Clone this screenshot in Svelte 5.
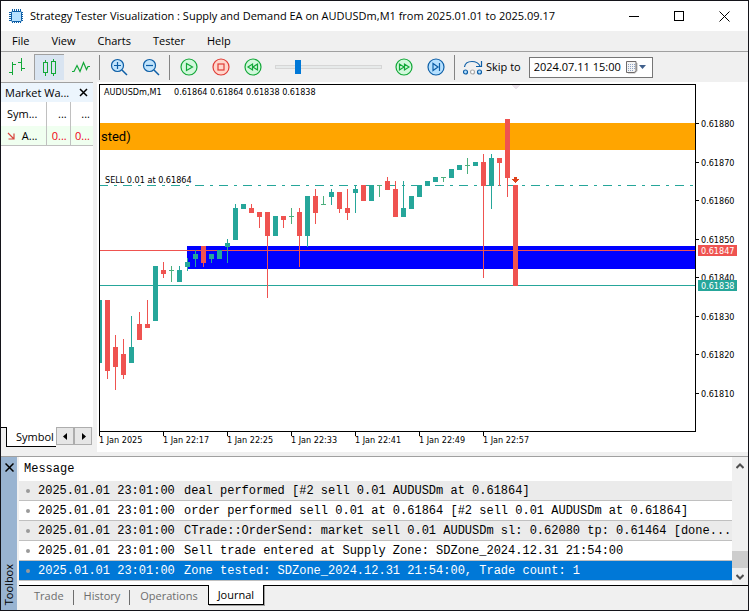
<script>
  let speed = 19
  let skipTo = '2024.07.11 15:00'
  let chartType = 'candles'
  let activeTab = 'Journal'

  const menus = ['File', 'View', 'Charts', 'Tester', 'Help']
  const tabs = ['Trade', 'History', 'Operations', 'Journal']

  const times = ['1 Jan 2025', '1 Jan 22:17', '1 Jan 22:25', '1 Jan 22:33', '1 Jan 22:41', '1 Jan 22:49', '1 Jan 22:57']

  const prices = [
    ['0.61880', 39],
    ['0.61870', 78],
    ['0.61860', 116],
    ['0.61850', 155],
    ['0.61840', 193],
    ['0.61830', 232],
    ['0.61820', 270],
    ['0.61810', 309]
  ]

  // kind, high, low, body top, body bottom (chart rows)
  const candles = [
    ['up', 216, 279, 216, 279],
    ['down', 216, 295, 216, 287],
    ['down', 251, 306, 263, 283],
    ['down', 255, 295, 270, 291],
    ['up', 232, 279, 263, 279],
    ['down', 228, 256, 240, 256],
    ['down', 216, 244, 240, 244],
    ['up', 182, 237, 182, 237],
    ['down', 178, 194, 186, 190],
    ['flat', 182, 198, 186, 187],
    ['up', 182, 198, 186, 198],
    ['up', 174, 187, 178, 183],
    ['up', 166, 183, 170, 175],
    ['down', 162, 183, 162, 179],
    ['up', 170, 179, 170, 175],
    ['up', 166, 175, 166, 175],
    ['up', 155, 179, 159, 163],
    ['up', 120, 156, 124, 156],
    ['up', 120, 125, 120, 125],
    ['down', 120, 129, 124, 129],
    ['down', 128, 144, 128, 133],
    ['down', 128, 214, 128, 152],
    ['up', 132, 152, 132, 152],
    ['down', 132, 144, 132, 136],
    ['flat', 124, 140, 132, 133],
    ['down', 124, 183, 128, 152],
    ['up', 112, 163, 112, 152],
    ['down', 105, 140, 112, 129],
    ['flat', 112, 121, 120, 121],
    ['up', 105, 121, 108, 113],
    ['down', 108, 129, 108, 125],
    ['down', 105, 136, 124, 129],
    ['up', 101, 129, 105, 109],
    ['down', 101, 117, 101, 117],
    ['up', 101, 117, 101, 117],
    ['flat', 101, 113, 101, 102],
    ['down', 93, 106, 97, 106],
    ['down', 97, 133, 105, 133],
    ['up', 97, 133, 124, 133],
    ['up', 112, 125, 112, 125],
    ['up', 101, 113, 101, 113],
    ['up', 97, 102, 97, 102],
    ['up', 93, 98, 93, 98],
    ['flat', 93, 98, 93, 94],
    ['up', 85, 94, 85, 94],
    ['up', 81, 86, 81, 86],
    ['flat', 74, 90, 81, 82],
    ['up', 78, 82, 78, 82],
    ['down', 70, 194, 78, 102],
    ['up', 70, 125, 74, 102],
    ['down', 74, 102, 74, 79],
    ['down', 35, 113, 35, 94],
    ['down', 101, 202, 101, 202]
  ]

  const journal = [
    'deal performed [#2 sell 0.01 AUDUSDm at 0.61864]',
    'order performed sell 0.01 at 0.61864 [#2 sell 0.01 AUDUSDm at 0.61864]',
    'CTrade::OrderSend: market sell 0.01 AUDUSDm sl: 0.62080 tp: 0.61464 [done...',
    'Sell trade entered at Supply Zone: SDZone_2024.12.31 21:54:00',
    'Zone tested: SDZone_2024.12.31 21:54:00, Trade count: 1'
  ]
  let selected = 4
</script>

<div class="window">
  <header class="titlebar">
    <svg class="app-icon" width="16" height="16" viewBox="0 0 16 16">
      <path d="M4.5 1v14M6.5 1v14M8.5 1v14M10.5 1v14M12.5 1v14M1 4.5h14M1 6.5h14M1 8.5h14M1 10.5h14M1 12.5h14" stroke="#0d5ea6" />
      <rect x="3.5" y="3.5" width="10" height="10" rx="1" fill="#b5e0ff" stroke="#0d5ea6" />
    </svg>
    <h1>Strategy Tester Visualization : Supply and Demand EA on AUDUSDm,M1 from 2025.01.01 to 2025.09.17</h1>
    <div class="caption">
      <button type="button" aria-label="Minimize">
        <svg width="11" height="11"><path d="M0 5.5h10" stroke="#000" /></svg>
      </button>
      <button type="button" aria-label="Maximize">
        <svg width="11" height="11"><rect x="0.5" y="0.5" width="9" height="9" fill="none" stroke="#000" /></svg>
      </button>
      <button type="button" aria-label="Close">
        <svg width="11" height="11"><path d="M0.5 0.5l10 10M10.5 0.5l-10 10" stroke="#000" /></svg>
      </button>
    </div>
  </header>

  <nav class="menu">
    {#each menus as item (item)}
      <button type="button">{item}</button>
    {/each}
  </nav>

  <div class="toolbar">
    <button type="button" class="tool" class:pressed={chartType === 'bars'} aria-label="Bar chart" on:click={() => (chartType = 'bars')}>
      <svg width="18" height="18" fill="none" stroke="#12a838">
        <path d="M4.5 4v13M1 14.5h3M5 6.5h3M13.5 0v13M10 4.5h3M14 10.5h3" />
      </svg>
    </button>
    <button type="button" class="tool" class:pressed={chartType === 'candles'} aria-label="Candlesticks" on:click={() => (chartType = 'candles')}>
      <svg width="18" height="18" fill="none" stroke="#12a838">
        <path d="M4.5 1v2M4.5 14v3M12.5 0v2M12.5 15v2" />
        <rect x="2.5" y="3.5" width="4" height="10" />
        <rect x="10.5" y="2.5" width="4" height="12" />
      </svg>
    </button>
    <button type="button" class="tool" class:pressed={chartType === 'line'} aria-label="Line chart" on:click={() => (chartType = 'line')}>
      <svg width="18" height="18" fill="none" stroke="#12a838" stroke-width="1.2">
        <path d="M0 13.5h2l3-6 3 6 3.5-9 3 7 1.5-3h2" />
      </svg>
    </button>
    <span class="sep"></span>
    <button type="button" class="tool" aria-label="Zoom in">
      <svg width="18" height="18">
        <path d="M12 12l5 5" stroke="#0d5ea6" stroke-width="1.5" />
        <circle cx="7.5" cy="7.5" r="6" fill="#c1e4fc" stroke="#0d5ea6" stroke-width="1.2" />
        <path d="M4 7.5h7M7.5 4v7" stroke="#0d5ea6" stroke-width="1.2" />
      </svg>
    </button>
    <button type="button" class="tool" aria-label="Zoom out">
      <svg width="18" height="18">
        <path d="M12 12l5 5" stroke="#0d5ea6" stroke-width="1.5" />
        <circle cx="7.5" cy="7.5" r="6" fill="#c1e4fc" stroke="#0d5ea6" stroke-width="1.2" />
        <path d="M4 7.5h7" stroke="#0d5ea6" stroke-width="1.2" />
      </svg>
    </button>
    <span class="sep"></span>
    <button type="button" class="tool" aria-label="Play">
      <svg width="18" height="18" fill="none" stroke="#12a838" stroke-width="1.2">
        <circle cx="9" cy="9" r="8" fill="#d2f8dc" />
        <path d="M6.5 5.5v7l6-3.5z" />
      </svg>
    </button>
    <button type="button" class="tool" aria-label="Stop">
      <svg width="18" height="18" fill="none" stroke="#e03c36" stroke-width="1.2">
        <circle cx="9" cy="9" r="8" fill="#ffd6cc" />
        <rect x="6" y="6" width="6" height="6" />
      </svg>
    </button>
    <button type="button" class="tool" aria-label="Slower">
      <svg width="18" height="18" fill="none" stroke="#12a838" stroke-width="1.2">
        <circle cx="9" cy="9" r="8" fill="#d2f8dc" />
        <path d="M8.5 6v6l-4.5-3zM13.5 6v6l-4.5-3z" />
      </svg>
    </button>
    <input class="speed" type="range" min="0" max="100" aria-label="Speed" bind:value={speed} />
    <button type="button" class="tool" aria-label="Faster">
      <svg width="18" height="18" fill="none" stroke="#12a838" stroke-width="1.2">
        <circle cx="9" cy="9" r="8" fill="#d2f8dc" />
        <path d="M4.5 6v6l4.5-3zM9.5 6v6l4.5-3z" />
      </svg>
    </button>
    <button type="button" class="tool" aria-label="Step">
      <svg width="18" height="18" fill="none" stroke="#0d5ea6" stroke-width="1.2">
        <circle cx="9" cy="9" r="8" fill="#b5e0ff" />
        <path d="M6 5.5v7l5-3.500zM12.5 5v8" />
      </svg>
    </button>
    <span class="sep"></span>
    <label class="skip" for="skip-to">
      <svg width="20" height="18" fill="none" stroke="#0d5ea6" stroke-width="1.2">
        <path d="M1.5 9C2 5 5 3.500 9 3.500c4 0 6.500 1.500 8 4.500M18.5 3v5.500h-5.500" />
        <circle cx="2.5" cy="14" r="2" fill="#b5e0ff" />
        <circle cx="9.5" cy="14" r="2" fill="#fff" stroke="#aaa" />
        <circle cx="16.5" cy="14" r="2" fill="#b5e0ff" />
      </svg>
      Skip to
    </label>
    <div class="date">
      <input id="skip-to" type="text" bind:value={skipTo} />
      <button type="button" aria-label="Open calendar">
        <svg width="21" height="13">
          <path d="M2 2h9.500v8L9 12.5H2z" fill="#b8b8b8" />
          <path d="M0.5 0.5h9.500v9l-1.500 2H0.5z" fill="#f4f4f4" stroke="#6f6a6a" />
          <path d="M2 3.5h7M2 5.5h7M2 7.5h7M2 9.5h5" stroke="#8fa3c4" stroke-dasharray="1 1" />
          <path d="M13 4h7l-3.500 4z" fill="#40608c" />
        </svg>
      </button>
    </div>
  </div>

  <main class="workspace">
    <section class="market">
      <div class="market-head">
        <h2>Market Wa...</h2>
        <button type="button" aria-label="Close Market Watch">
          <svg width="9" height="9"><path d="M1 1l7 7M8 1l-7 7" stroke="#000" stroke-width="1.5" /></svg>
        </button>
      </div>
      <table>
        <thead>
          <tr><th>Sym...</th><th>...</th><th>...</th></tr>
        </thead>
        <tbody>
          <tr>
            <td>
              <svg width="8" height="8"><path d="M1 1l5.500 5.500M7 1.500V7H1.500" fill="none" stroke="#d8453c" stroke-width="1.2" /></svg>
              A...
            </td>
            <td class="price">0...</td>
            <td class="price">0...</td>
          </tr>
        </tbody>
      </table>
      <div class="market-tabs">
        <button type="button" class="symbols">Symbol</button>
        <div class="scrollers">
          <button type="button" aria-label="Scroll tabs left"><svg width="5" height="7"><path d="M4 0v7L0 3.500z" /></svg></button>
          <button type="button" aria-label="Scroll tabs right"><svg width="5" height="7"><path d="M1 0v7l4-3.500z" /></svg></button>
        </div>
      </div>
    </section>

    <section class="chart">
      <div class="plot-row">
        <svg class="plot" shape-rendering="crispEdges">
          <rect class="supply" x="0" y="38" width="100%" height="27" />
          <rect class="demand" x="87" y="161" width="100%" height="23" />
          <text class="zone" x="1" y="56">sted)</text>
          <line class="order" x1="-1" y1="100.5" x2="100%" y2="100.5" />
          <rect class="down" x="0" y="165" width="100%" height="1" />
          <rect class="up" x="0" y="200" width="100%" height="1" />
          {#each candles as [kind, high, low, top, bottom], i}
            <g class={kind}>
              <rect x={i * 8 - 1} y={high - 1} width="1" height={low - high} />
              <rect x={i * 8 - 3} y={top - 1} width="5" height={bottom - top} />
            </g>
          {/each}
          <path class="deal" d="M414 92h3v2h2v1h-1v1h-1v1h-1v1h-1v-1h-1v-1h-1v-1h-1v-1h2z" />
          <path class="shift" d="M411 0h9l-4 5z" />
          <text x="4" y="10">AUDUSDm,M1</text>
          <text x="74" y="10">0.61864 0.61864 0.61838 0.61838</text>
          <text x="5" y="98">SELL 0.01 at 0.61864</text>
        </svg>
        <svg class="scale" shape-rendering="crispEdges">
          {#each prices as [label, y] (label)}
            <rect x="0" y={y} width="3" height="1" />
            <text x="5" y={y + 4}>{label}</text>
          {/each}
          <rect class="down" x="2" y="161" width="39" height="11" />
          <text class="tag" x="5" y="170">0.61847</text>
          <rect class="up" x="2" y="196" width="39" height="11" />
          <text class="tag" x="5" y="205">0.61838</text>
        </svg>
      </div>
      <div class="times">
        {#each times as time (time)}
          <span>{time}</span>
        {/each}
      </div>
    </section>
  </main>

  <section class="toolbox">
    <div class="strip">
      <button type="button" aria-label="Close Toolbox">
        <svg width="9" height="9"><path d="M0.5 0.5l8 8M8.5 0.5l-8 8" stroke="#000" stroke-width="1.5" /></svg>
      </button>
      <span>Toolbox</span>
    </div>
    <div class="panel">
      <div class="log">
        <table>
          <colgroup>
            <col class="dot-col" />
            <col class="when-col" />
            <col />
          </colgroup>
          <thead>
            <tr><th colspan="3">Message</th></tr>
          </thead>
          <tbody>
            {#each journal as message, i}
              <tr class:selected={selected === i} on:click={() => (selected = i)}>
                <td class="dot"><i></i></td>
                <td>2025.01.01 23:01:00</td>
                <td>{message}</td>
              </tr>
            {/each}
          </tbody>
        </table>
        <div class="scrollbar">
          <button type="button" aria-label="Scroll up"><svg width="8" height="6"><path d="M0.5 5L4 1.5 7.5 5" /></svg></button>
          <div class="track"><div class="thumb"></div></div>
          <button type="button" aria-label="Scroll down"><svg width="8" height="6"><path d="M0.5 1L4 4.5 7.5 1" /></svg></button>
        </div>
      </div>
      <div class="tabs" role="tablist">
        {#each tabs as tab (tab)}
          <button type="button" role="tab" aria-selected={activeTab === tab} class:active={activeTab === tab} on:click={() => (activeTab = tab)}>{tab}</button>
        {/each}
      </div>
    </div>
  </section>
</div>

<style>
  :global(body) {
    margin: 0;
  }

  .window {
    box-sizing: border-box;
    display: flex;
    flex-direction: column;
    min-height: 100vh;
    border: 1px solid #14141a;
    background: #f0f0f0;
    color: #000;
    font-family: 'Open Sans', 'Noto Sans', sans-serif;
    font-size: 11px;
    line-height: 16px;
  }

  button {
    margin: 0;
    padding: 0;
    border: 0;
    background: none;
    color: inherit;
    font: inherit;
  }

  svg {
    display: block;
    flex: none;
  }

  h1,
  h2 {
    margin: 0;
    font-size: 11px;
    font-weight: 400;
    white-space: nowrap;
  }

  .titlebar {
    display: flex;
    align-items: center;
    gap: 6px;
    height: 30px;
    padding-left: 7px;
    background: #fff;
  }

  h1 {
    flex: 1;
    min-width: 0;
    overflow: hidden;
  }

  .caption {
    display: flex;
    height: 100%;
    padding-right: 1px;
  }

  .caption button {
    display: grid;
    place-items: center;
    width: 45px;
  }

  .menu {
    display: flex;
    gap: 22px;
    height: 20px;
    padding-left: 11px;
    border-bottom: 1px solid #a0a0a0;
  }

  .toolbar {
    display: flex;
    align-items: center;
    height: 30px;
  }

  .tool {
    display: grid;
    place-items: center;
    box-sizing: border-box;
    width: 30px;
    height: 26px;
    margin: 0 1px;
  }

  .tool.pressed {
    border: 1px solid #a0a0a0;
    border-width: 1px 0 0 1px;
    background: #d9e4f1;
  }

  .sep {
    width: 1px;
    height: 25px;
    margin: 0 3px 0 2px;
    background: #848484;
  }

  .speed {
    appearance: none;
    width: 107px;
    height: 14px;
    margin: 0 6px;
    background: none;
  }

  .speed::-webkit-slider-runnable-track {
    box-sizing: border-box;
    height: 4px;
    border: 1px solid #d6d6d6;
    background: #e7eaea;
  }

  .speed::-webkit-slider-thumb {
    appearance: none;
    width: 6px;
    height: 14px;
    margin-top: -6px;
    background: #0078d7;
  }

  .skip {
    display: flex;
    align-items: center;
    gap: 3px;
    margin-left: 5px;
    white-space: nowrap;
  }

  .date {
    display: flex;
    align-items: center;
    box-sizing: border-box;
    width: 124px;
    height: 21px;
    margin-left: 8px;
    border: 1px solid #767676;
    background: #fff;
  }

  .date input {
    flex: 1;
    min-width: 0;
    padding: 0 0 0 4px;
    border: 0;
    outline: 0;
    background: none;
    font: inherit;
  }

  .date button {
    margin-right: 5px;
  }

  .workspace {
    display: flex;
    flex: 1;
    gap: 4px;
  }

  .market {
    display: flex;
    flex-direction: column;
    width: 92px;
    border-top: 1px solid #a0a0a0;
    background: #fff;
  }

  .market-head {
    display: flex;
    align-items: center;
    justify-content: space-between;
    height: 19px;
    padding: 0 5px 0 4px;
    background: #ecf5fd;
  }

  table {
    border-collapse: separate;
    border-spacing: 0;
  }

  th {
    font-weight: 400;
    text-align: left;
  }

  .market table {
    width: 100%;
    table-layout: fixed;
  }

  .market th,
  .market td {
    box-sizing: border-box;
    width: 23px;
    height: 24px;
    padding: 0 3px 0 0;
    border-left: 1px solid #c0c0c0;
    text-align: right;
    white-space: nowrap;
  }

  .market th:first-child,
  .market td:first-child {
    width: 45px;
    padding: 0 6px;
    border-left: 0;
    text-align: left;
  }

  .market td {
    height: 20px;
    border-bottom: 1px solid #c0c0c0;
    background: #f0fff0;
  }

  .market td svg {
    display: inline-block;
    margin-right: 4px;
  }

  .market .price {
    color: #f00014;
  }

  .market-tabs {
    display: flex;
    height: 25px;
    margin-top: auto;
    padding-left: 5px;
    background: linear-gradient(#000, #000) 0 0 / 6px 1px no-repeat #f0f0f0;
  }

  .symbols {
    box-sizing: border-box;
    width: 50px;
    height: 20px;
    padding-left: 9px;
    border: 1px solid #000;
    border-width: 0 0 1px 1px;
    background: #fff;
    text-align: left;
  }

  .scrollers {
    display: flex;
  }

  .scrollers button {
    display: grid;
    place-items: center;
    box-sizing: border-box;
    width: 18px;
    height: 18px;
    border: 1px solid #adadad;
    background: #e6e6e6;
  }

  .chart {
    flex: 1;
    min-width: 0;
    padding: 2px 0 0 2px;
    background: #fff;
    font-family: 'DejaVu Sans Condensed', 'DejaVu Sans', sans-serif;
    font-size: 9px;
  }

  .plot-row {
    display: flex;
  }

  .plot {
    flex: 1;
    min-width: 0;
    height: 346px;
    border: 1px solid #000;
  }

  .scale {
    width: 52px;
    height: 348px;
  }

  .supply {
    fill: #ffa500;
  }

  .demand {
    fill: #00f;
  }

  .up {
    fill: #26a69a;
  }

  .down {
    fill: #ef5350;
  }

  .flat {
    fill: #4caf7d;
  }

  .order {
    stroke: #26a69a;
    stroke-dasharray: 9 6 3 6;
  }

  .deal {
    fill: #e0421b;
  }

  .shift {
    fill: #ece4ec;
  }

  .zone {
    font-family: Roboto, sans-serif;
    font-size: 13px;
  }

  .tag {
    fill: #fff;
  }

  .times {
    display: flex;
    height: 20px;
    overflow: hidden;
  }

  .times span {
    box-sizing: border-box;
    width: 64px;
    line-height: 17px;
    background: linear-gradient(#000, #000) 0 0 / 1px 4px no-repeat;
    white-space: nowrap;
  }

  .toolbox {
    display: flex;
    gap: 2px;
    margin-top: 4px;
    border-top: 1px solid #a0a0a0;
  }

  .strip {
    display: flex;
    flex-direction: column;
    align-items: center;
    justify-content: space-between;
    width: 16px;
    padding: 6px 0 5px;
    background: #99b4d1;
  }

  .strip span {
    writing-mode: vertical-rl;
    transform: rotate(180deg);
    line-height: 14px;
  }

  .panel {
    flex: 1;
    min-width: 0;
  }

  .log {
    display: flex;
    height: 128px;
    border-bottom: 1px solid #000;
    background: #fff;
  }

  .log table {
    flex: 1;
    width: 100%;
    min-width: 0;
    align-self: flex-start;
    table-layout: fixed;
    font-family: 'Liberation Mono', monospace;
    font-size: 12px;
  }

  .log th {
    height: 24px;
    padding: 0 0 0 5px;
  }

  .log td {
    box-sizing: border-box;
    height: 20px;
    padding: 0;
    border-bottom: 1px solid #c0c0c0;
    white-space: nowrap;
  }

  .log tbody tr:nth-child(odd) {
    background: #ebebeb;
  }

  .log tbody tr.selected {
    background: #0078d7;
    color: #fff;
  }

  .dot-col {
    width: 19px;
  }

  .when-col {
    width: 146px;
  }

  .dot i {
    display: block;
    width: 4px;
    height: 4px;
    margin-left: 7px;
    border-radius: 50%;
    background: #9a9a9a;
  }

  .scrollbar {
    display: flex;
    flex: none;
    flex-direction: column;
    width: 16px;
    background: #f0f0f0;
  }

  .scrollbar button {
    display: grid;
    place-items: center;
    height: 17px;
  }

  .scrollbar path {
    fill: none;
    stroke: #505050;
    stroke-width: 2px;
  }

  .track {
    display: flex;
    flex: 1;
    flex-direction: column;
    justify-content: flex-end;
  }

  .thumb {
    height: 17px;
    background: #cdcdcd;
  }

  .tabs {
    display: flex;
    height: 24px;
    padding-left: 5px;
  }

  .tabs button {
    height: 20px;
    padding: 0 10px;
    color: #6d6d6d;
    background: linear-gradient(#6d6d6d, #6d6d6d) 100% 4px / 1px 15px no-repeat;
  }

  .tabs button:nth-last-child(2) {
    background: none;
  }

  .tabs button.active {
    margin-top: -1px;
    padding: 0 9px;
    border: 1px solid #000;
    border-top: 0;
    background: #fff;
    color: #000;
    box-shadow: 1px 1px 0 #a0a0a0;
  }
</style>
